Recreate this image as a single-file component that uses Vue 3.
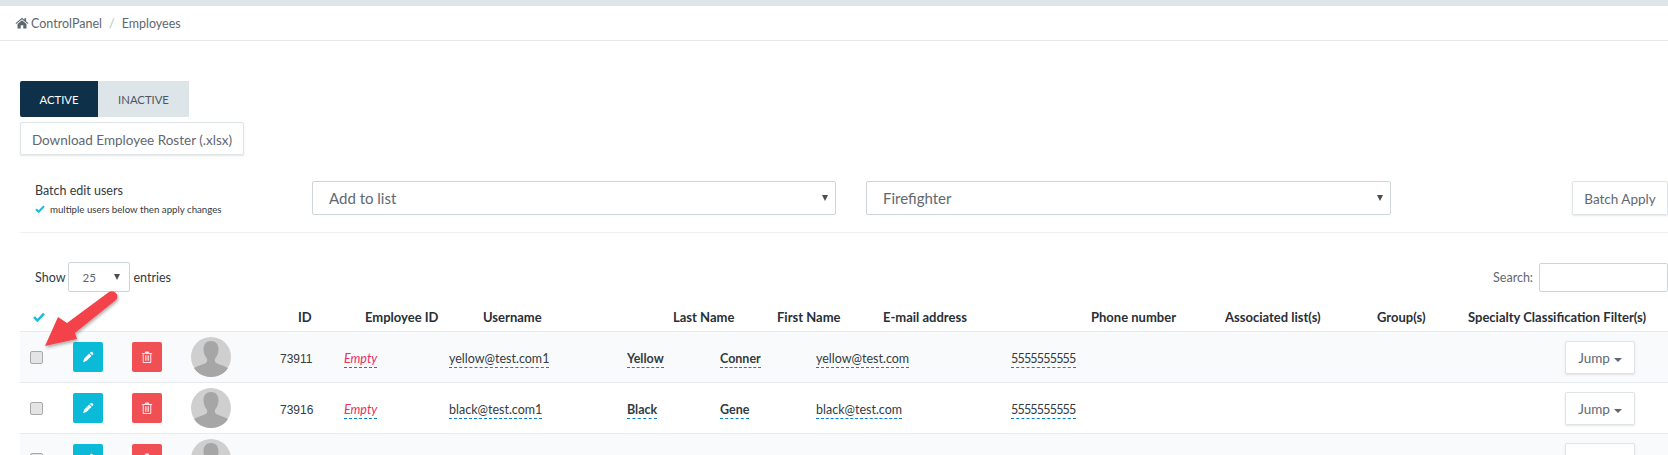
<script setup>
const columns = [
  'ID', 'Employee ID', 'Username', 'Last Name', 'First Name', 'E-mail address',
  'Phone number', 'Associated list(s)', 'Group(s)', 'Specialty Classification Filter(s)',
]
const rows = [
  { id: '73911', user: 'yellow@test.com1', last: 'Yellow', first: 'Conner', mail: 'yellow@test.com', phone: '5555555555' },
  { id: '73916', user: 'black@test.com1', last: 'Black', first: 'Gene', mail: 'black@test.com', phone: '5555555555' },
  { id: '73920', user: 'orange@test.com1', last: 'Orange', first: 'Hank', mail: 'orange@test.com', phone: '5555555555' },
]
</script>

<template>
  <div class="page">
    <div class="topbar"></div>
    <nav class="crumbs">
      <svg class="home" viewBox="0 0 16 14"><path d="M8 1 0.500 7.400l.8.9L8 2.700l6.700 5.600.8-.9L12.800 5V1.500h-2v1.800L8 1zM2.800 8.200V13.500h3.700V9.700h3V13.500h3.700V8.200L8 3.900 2.800 8.200z" /></svg>
      <span>ControlPanel</span>
      <span class="sep">/</span>
      <span>Employees</span>
    </nav>

    <main class="content">
      <div class="tabs">
        <button class="tab tab-on">ACTIVE</button>
        <button class="tab tab-off">INACTIVE</button>
      </div>
      <button class="btn download">Download Employee Roster (.xlsx)</button>

      <section class="batch">
        <div class="batch-info">
          <div class="batch-title">Batch edit users</div>
          <div class="batch-note">
            <svg class="tick-small" viewBox="0 0 12 10"><path d="M1 5.200 4.400 8.500 11 1.600" /></svg>
            multiple users below then apply changes
          </div>
        </div>
        <div class="select wide"><span>Add to list</span><i class="caret"></i></div>
        <div class="select wide second"><span>Firefighter</span><i class="caret"></i></div>
        <button class="btn apply">Batch Apply</button>
      </section>

      <section class="filters">
        <div class="length">
          <span>Show</span>
          <div class="select small"><span>25</span><i class="caret"></i></div>
          <span>entries</span>
        </div>
        <div class="search">
          <span>Search:</span>
          <div class="search-box"></div>
        </div>
      </section>

      <div class="thead">
        <svg class="tick-head" viewBox="0 0 12 10"><path d="M1 5.200 4.400 8.500 11 1.600" /></svg>
        <span v-for="c in columns" :key="c">{{ c }}</span>
      </div>

      <div v-for="(r, i) in rows" :key="r.id" class="row" :class="{ odd: i % 2 === 0 }">
        <span class="check"></span>
        <span class="square edit">
          <svg viewBox="0 0 14 14"><path d="M10.200 1.200a1.200 1.200 0 0 1 1.700 0l1 1a1.200 1.200 0 0 1 0 1.700l-1 1-2.700-2.700 1-1zM8.400 3 11.100 5.700 5 11.800 1.300 13 2.400 9.100 8.400 3z" /></svg>
        </span>
        <span class="square trash">
          <svg viewBox="0 0 14 14"><path fill-rule="evenodd" d="M5 .5h4l.7 1.700H13v1.200h-1V13a1 1 0 0 1-1 1H3a1 1 0 0 1-1-1V3.400H1V2.200h3.300L5 .5zM3.200 3.400v9.400h7.600V3.400H3.200zM4.800 5h1v6.400h-1V5zm1.700 0h1v6.400h-1V5zm1.700 0h1v6.400h-1V5z" /></svg>
        </span>
        <svg class="avatar" viewBox="0 0 40 40">
          <circle cx="20" cy="20" r="20" fill="#cfcfcf" />
          <path fill="#a6a6a6" d="M20 4c-4.800 0-7.500 3.400-7.500 8.200 0 3.800 1.500 7.300 3.400 9.300.6 1.700.3 3.200-.6 4-2.600 2.100-8.900 3.100-12.200 5.600C6.200 36.600 12.700 40 20 40s13.800-3.400 16.900-8.900c-3.300-2.500-9.600-3.500-12.200-5.600-.9-.8-1.200-2.300-.6-4 1.900-2 3.400-5.500 3.400-9.300C27.500 7.400 24.800 4 20 4z" />
        </svg>
        <span class="cell c-id">{{ r.id }}</span>
        <span class="cell"><em class="empty dash">Empty</em></span>
        <span class="cell"><span class="dash">{{ r.user }}</span></span>
        <span class="cell"><b class="dash">{{ r.last }}</b></span>
        <span class="cell"><b class="dash">{{ r.first }}</b></span>
        <span class="cell"><span class="dash">{{ r.mail }}</span></span>
        <span class="cell"><span class="dash phone">{{ r.phone }}</span></span>
        <button class="btn jump">Jump<i class="jump-caret"></i></button>
      </div>
    </main>

    <svg class="arrow" viewBox="0 0 100 80" aria-hidden="true">
      <defs>
        <filter id="arrow-shadow" x="-20%" y="-20%" width="150%" height="150%">
          <feDropShadow dx="1" dy="2" stdDeviation="1.500" flood-color="#000" flood-opacity="0.3" />
        </filter>
      </defs>
      <path filter="url(#arrow-shadow)" fill="#f4434c" d="M7 58 20 29 29 35 71 4C77 1 82 8 78 12L37 45 39 51Z" />
    </svg>
  </div>
</template>

<style>
html, body { margin: 0; background: #fff; }
</style>

<style scoped>
.page {
  position: relative;
  width: 1668px;
  height: 455px;
  overflow: hidden;
  background: #fff;
  color: #333a42;
  font-family: "Lato", "Noto Sans", sans-serif;
  font-size: 12.500px;
}
.topbar { height: 6px; background: #dde5e8; }
.crumbs {
  display: flex;
  align-items: center;
  height: 34px;
  padding-left: 15px;
  border-bottom: 1px solid #e4e8ea;
  color: #5d6770;
}
.home { width: 14px; height: 12px; margin-right: 2px; fill: #5d6770; }
.sep { margin: 0 7px; color: #b9c0c5; }
.content { padding: 40px 0 0 20px; }
.tabs { display: flex; }
.tab {
  height: 36px;
  border: 0;
  font: inherit;
  font-size: 11.300px;
}
.tab-on { width: 78px; background: #0e3048; color: #fff; border-radius: 2px 0 0 2px; }
.tab-off { width: 91px; background: #dde5e8; color: #4b5660; }
.btn {
  border: 1px solid #dfe4e7;
  border-radius: 2px;
  background: #fff;
  color: #5f6871;
  font: inherit;
  padding: 2px 0 0;
  box-shadow: 0 1px 2px rgba(0, 0, 0, 0.1);
}
.download { display: block; width: 224px; height: 33px; margin-top: 5px; font-size: 13.500px; }
.batch {
  display: flex;
  height: 51px;
  margin-top: 26px;
  border-bottom: 1px solid #eef0f2;
}
.batch-info { width: 292px; padding: 2px 0 0 15px; box-sizing: border-box; }
.batch-title { line-height: 16px; color: #333a42; }
.batch-note { font-size: 9.700px; line-height: 14px; margin-top: 3px; color: #333a42; display: flex; align-items: center; }
.tick-small { width: 10px; height: 8px; margin-right: 5px; fill: none; stroke: #1fbad6; stroke-width: 2.500; }
.select {
  position: relative;
  box-sizing: border-box;
  border: 1px solid #ced5d9;
  border-radius: 2px;
  background: #fff;
  color: #5f6871;
  display: flex;
  align-items: center;
}
.select.wide {
  width: 524px;
  height: 34px;
  padding-left: 16px;
  font-size: 15px;
}
.select.wide.second { margin-left: 30px; width: 525px; }
.caret {
  position: absolute;
  right: 7px;
  top: 50%;
  margin-top: -3px;
  border-left: 3px solid transparent;
  border-right: 3px solid transparent;
  border-top: 6px solid #4d4d4d;
}
.apply { width: 96px; height: 34px; margin-left: auto; font-size: 13.500px; }
.filters {
  display: flex;
  justify-content: space-between;
  align-items: center;
  margin-top: 29px;
  height: 30px;
}
.length { display: flex; align-items: center; padding-left: 15px; gap: 3px; }
.select.small { width: 62px; height: 30px; padding-left: 13px; font-size: 11.500px; }
.select.small .caret { right: 9px; }
.search { display: flex; align-items: center; gap: 6px; color: #5f6871; }
.search-box {
  box-sizing: border-box;
  width: 129px;
  height: 29px;
  border: 1px solid #ced5d9;
  border-radius: 2px;
}
.thead {
  box-sizing: border-box;
  height: 40px;
  padding: 11px 0 0 13px;
  border-bottom: 1px solid #e8ebed;
  font-weight: 700;
  font-size: 13px;
  color: #2a2f36;
  display: grid;
  grid-template-columns: 265px 67px 118px 190px 104px 106px 208px 134px 152px 91px auto;
  align-items: center;
  white-space: nowrap;
}
.tick-head { width: 12px; height: 10px; fill: none; stroke: #1fbad6; stroke-width: 2.500; }
.row {
  box-sizing: border-box;
  height: 51px;
  padding-left: 10px;
  display: grid;
  grid-template-columns: 43px 59px 59px 89px 64px 105px 178px 93px 96px 195px 554px 70px;
  align-items: center;
  border-bottom: 1px solid #e8ebed;
  white-space: nowrap;
}
.row.odd { background: #f9fafb; }
.check {
  box-sizing: border-box;
  width: 13px;
  height: 13px;
  background: #e4e4e4;
  border: 1px solid #a9a9a9;
  border-radius: 2px;
}
.square {
  width: 30px;
  height: 30px;
  border-radius: 2px;
  display: flex;
  align-items: center;
  justify-content: center;
}
.square svg { width: 12px; height: 12px; fill: #fff; }
.edit { background: #0bbad6; }
.trash { background: #f04f54; }
.trash svg { fill: #ffe0e8; }
.avatar { width: 40px; height: 40px; }
.cell { padding-top: 3px; }
.c-id { font-family: "Liberation Sans", sans-serif; font-size: 12px; padding-top: 4px; }
.dash { border-bottom: 1px dashed #0a7fd0; padding-bottom: 1px; }
.phone { letter-spacing: -0.8px; }
.empty { color: #e8305c; font-style: italic; }
.jump { width: 70px; height: 33px; font-size: 13.500px; }
.jump-caret {
  display: inline-block;
  margin-left: 4px;
  vertical-align: middle;
  border-left: 4px solid transparent;
  border-right: 4px solid transparent;
  border-top: 4px solid #5f6871;
}
.arrow { position: absolute; left: 38px; top: 288px; width: 100px; height: 80px; }
</style>
